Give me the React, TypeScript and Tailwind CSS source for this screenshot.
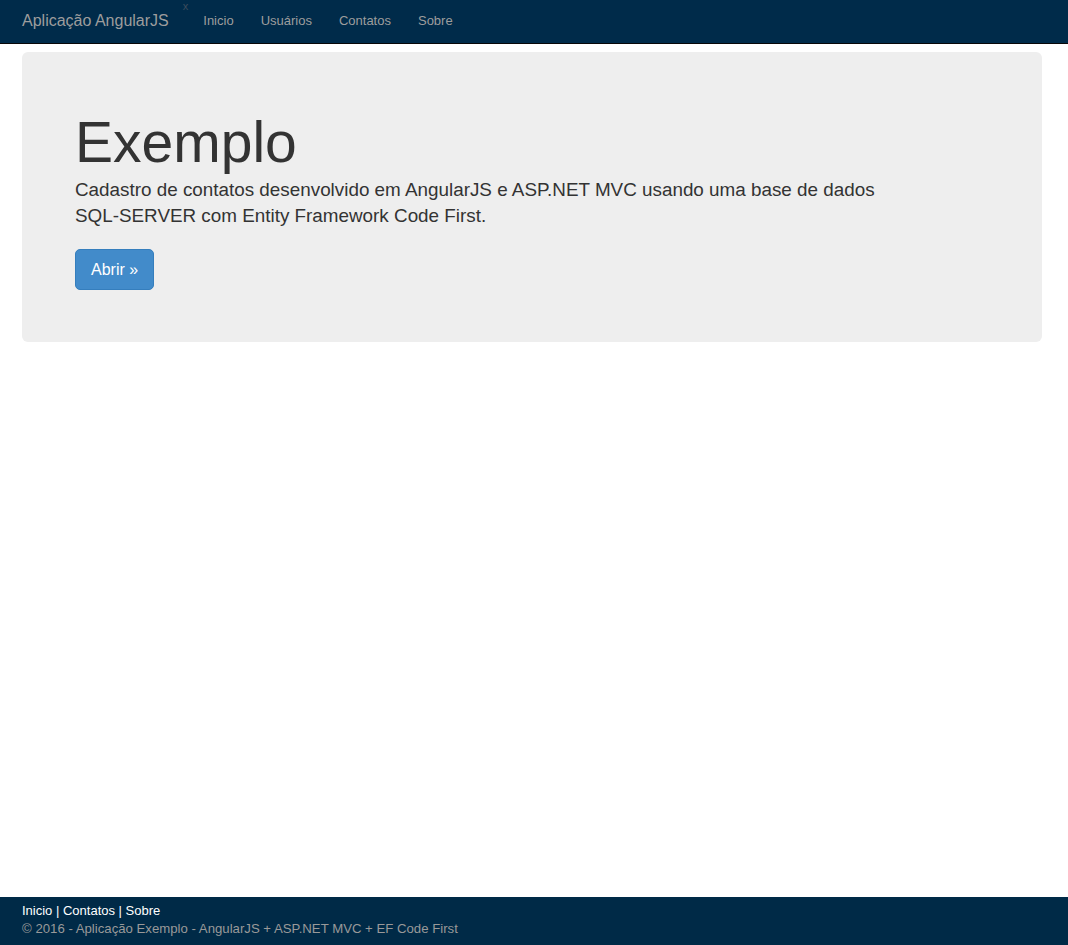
import React from "react";

export default function App() {
  return (
    <div
      className="min-h-screen flex flex-col bg-white text-[#333]"
      style={{ fontFamily: '"Liberation Sans", Arial, sans-serif' }}
    >
      <nav className="h-[44px] bg-[#002b4a] border-b border-[#080808] flex items-center pl-[22px]">
        <span className="text-[16px] text-[#9d9d9d] leading-[20px] mt-[-2px]">Aplicação AngularJS</span>
        <span className="text-[11px] text-[#3d4d5d] leading-none self-start mt-[1px] ml-[14px]">x</span>
        <ul className="flex gap-[27px] text-[13px] text-[#9d9d9d] ml-[15px] mt-[-2px]">
          <li>Inicio</li>
          <li>Usuários</li>
          <li>Contatos</li>
          <li>Sobre</li>
        </ul>
      </nav>

      <main className="flex-1 pl-[22px] pr-[26px] pt-[8px]">
        <div className="bg-[#eeeeee] rounded-[6px] pl-[53px] pt-[58px] pb-[52px]">
          <h1 className="text-[57px] leading-[64px] text-[#333]">Exemplo</h1>
          <p className="text-[18.85px] leading-[26px] mt-[3px] w-[830px] text-[#333]">
            Cadastro de contatos desenvolvido em AngularJS e ASP.NET MVC usando uma base de dados SQL-SERVER com Entity Framework Code First.
          </p>
          <button className="mt-[20px] bg-[#428bca] border border-[#357ebd] text-white text-[16px] leading-[21px] px-[15px] py-[9px] rounded-[5px]">
            Abrir »
          </button>
        </div>
      </main>

      <footer className="h-[48px] bg-[#002a47] px-[22px] pt-[5px] text-[13px] leading-[18px]">
        <div className="text-white">Inicio | Contatos | Sobre</div>
        <div className="text-[#999] text-[13.2px]">© 2016 - Aplicação Exemplo - AngularJS + ASP.NET MVC + EF Code First</div>
      </footer>
    </div>
  );
}
